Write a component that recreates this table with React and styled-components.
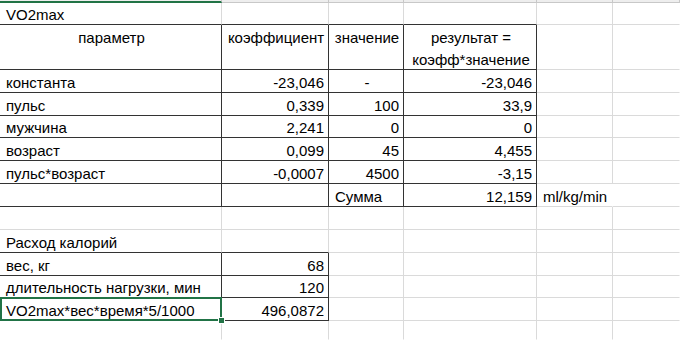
import React from "react";
import styled, { createGlobalStyle, css } from "styled-components";

const GlobalStyle = createGlobalStyle`
  html, body { margin: 0; padding: 0; background: #ffffff; }
  body { font-family: "Liberation Sans", Arial, sans-serif; }
`;

const GRID = "#dadada";
const DARK = "#333333";
const GREEN = "#217346";

const Sheet = styled.div`
  display: grid;
  grid-template-columns: 222px 107px 75px 133px 76px 67px;
  grid-template-rows: 3px 22px 45px 23px 23px 22px 23px 23px 23px 23px 23px 23px 22px 23px 19px;
  width: 680px;
  height: 340px;
  overflow: hidden;
  background: #ffffff;
  color: #000000;
  font-size: 15px;
`;

const ColHead = styled.div`
  box-sizing: border-box;
  background: #eeeeee;
  border-right: 1px solid #c8c8c8;
  border-bottom: 1px solid ${(p) => (p.$active ? GREEN : "#c8c8c8")};
  ${(p) => p.$active && css`border-bottom-width: 2px; margin-top: -1px;`}
`;

const lineColor = (v) => (v === "dark" ? DARK : v === "none" ? "transparent" : GRID);

const Cell = styled.div`
  box-sizing: border-box;
  position: relative;
  display: flex;
  align-items: ${(p) => (p.$top ? "flex-start" : "flex-end")};
  justify-content: ${(p) =>
    p.$align === "right" ? "flex-end" : p.$align === "center" ? "center" : "flex-start"};
  text-align: ${(p) => p.$align || "left"};
  padding: ${(p) => (p.$top ? "2px 4px 0 6px" : "0 4px 1px 6px")};
  line-height: ${(p) => (p.$top ? "22px" : "17px")};
  white-space: ${(p) => (p.$wrap ? "normal" : "nowrap")};
  border-right: 1px solid ${(p) => lineColor(p.$r)};
  border-bottom: 1px solid ${(p) => lineColor(p.$b)};
  ${(p) =>
    p.$selected &&
    css`
      &::after {
        content: "";
        position: absolute;
        left: 0;
        top: -1px;
        right: -1px;
        bottom: -1px;
        border: 2px solid ${GREEN};
        pointer-events: none;
      }
      &::before {
        content: "";
        position: absolute;
        width: 7px;
        height: 7px;
        right: -4px;
        bottom: -4px;
        background: ${GREEN};
        border: 1px solid #ffffff;
        box-sizing: border-box;
        z-index: 2;
      }
    `}
`;

const Text = styled.span`
  display: block;
`;

const rows = [
  [
    ["VO2max", "left", "light", "dark"],
    ["", "left", "light", "dark"],
    ["", "left", "light", "dark"],
    ["", "left", "light", "dark"],
    ["", "left", "light", "light"],
    ["", "left", "none", "light"],
  ],
  [
    ["параметр", "center", "dark", "dark", { top: true }],
    ["коэффициент", "center", "dark", "dark", { top: true }],
    ["значение", "center", "dark", "dark", { top: true }],
    ["результат =\nкоэфф*значение", "center", "dark", "dark", { top: true, wrap: true }],
    ["", "left", "light", "light"],
    ["", "left", "none", "light"],
  ],
  ...[
    ["константа", "-23,046", "-", "-23,046"],
    ["пульс", "0,339", "100", "33,9"],
    ["мужчина", "2,241", "0", "0"],
    ["возраст", "0,099", "45", "4,455"],
    ["пульс*возраст", "-0,0007", "4500", "-3,15"],
  ].map(([a, b, c, d]) => [
    [a, "left", "dark", "dark"],
    [b, "right", "dark", "dark"],
    [c, c === "-" ? "center" : "right", "dark", "dark"],
    [d, "right", "dark", "dark"],
    ["", "left", "light", "light"],
    ["", "left", "none", "light"],
  ]),
  [
    ["", "left", "dark", "dark"],
    ["", "left", "dark", "dark"],
    ["Сумма", "left", "dark", "dark"],
    ["12,159", "right", "dark", "dark"],
    ["ml/kg/min", "left", "none", "light"],
    ["", "left", "none", "light"],
  ],
  [
    ["", "left", "light", "light"],
    ["", "left", "light", "light"],
    ["", "left", "light", "light"],
    ["", "left", "light", "light"],
    ["", "left", "light", "light"],
    ["", "left", "none", "light"],
  ],
  [
    ["Расход калорий", "left", "light", "dark"],
    ["", "left", "light", "dark"],
    ["", "left", "light", "light"],
    ["", "left", "light", "light"],
    ["", "left", "light", "light"],
    ["", "left", "none", "light"],
  ],
  ...[
    ["вес, кг", "68"],
    ["длительность нагрузки, мин", "120"],
    ["VO2max*вес*время*5/1000", "496,0872", true],
  ].map(([a, b, sel]) => [
    [a, "left", "dark", "dark", { selected: sel }],
    [b, "right", "dark", "dark"],
    ["", "left", "light", "light"],
    ["", "left", "light", "light"],
    ["", "left", "light", "light"],
    ["", "left", "none", "light"],
  ]),
  [
    ["", "left", "light", "none"],
    ["", "left", "light", "none"],
    ["", "left", "light", "none"],
    ["", "left", "light", "none"],
    ["", "left", "light", "none"],
    ["", "left", "none", "none"],
  ],
];

export default function App() {
  return (
    <>
      <GlobalStyle />
      <Sheet>
        {[0, 1, 2, 3, 4, 5].map((i) => (
          <ColHead key={`h${i}`} $active={i === 0} />
        ))}
        {rows.map((row, ri) =>
          row.map(([text, align, r, b, extra = {}], ci) => (
            <Cell
              key={`${ri}-${ci}`}
              $align={align}
              $r={r}
              $b={b}
              $top={extra.top}
              $wrap={extra.wrap}
              $selected={extra.selected}
            >
              {text.includes("\n") ? (
                <Text>
                  {text.split("\n").map((line, li) => (
                    <Text key={li}>{line}</Text>
                  ))}
                </Text>
              ) : (
                text
              )}
            </Cell>
          ))
        )}
      </Sheet>
    </>
  );
}
